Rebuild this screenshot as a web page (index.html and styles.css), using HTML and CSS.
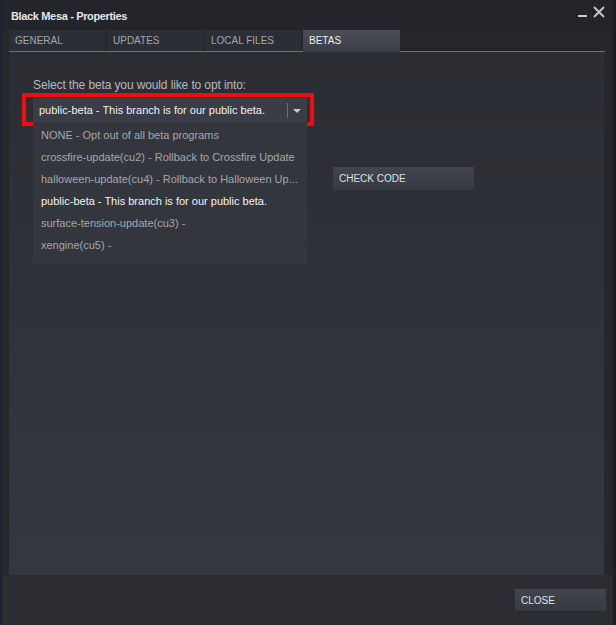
FILE: index.html
```html
<!DOCTYPE html>
<html>
<head>
<meta charset="utf-8">
<link rel="stylesheet" href="styles.css">
</head>
<body>
<div class="window">
  <div class="titlebar">
    <span class="title">Black Mesa - Properties</span>
    <div class="controls">
      <span class="min"></span>
      <svg class="close-x" width="12" height="12" viewBox="0 0 12 12"><path d="M1 1 L11 11 M11 1 L1 11" stroke="#c9ccd1" stroke-width="1.8" fill="none"/></svg>
    </div>
  </div>
  <div class="tabbar">
    <div class="tab">GENERAL</div>
    <div class="tab">UPDATES</div>
    <div class="tab">LOCAL FILES</div>
    <div class="tab active">BETAS</div>
  </div>
  <div class="panel">
    <div class="label">Select the beta you would like to opt into:</div>
    <div class="select-wrap">
      <div class="select">
        <span class="select-text">public-beta - This branch is for our public beta.</span>
        <span class="sep"></span>
        <span class="arrow"></span>
      </div>
      <div class="highlight"></div>
      <ul class="menu">
        <li>NONE - Opt out of all beta programs</li>
        <li>crossfire-update(cu2) - Rollback to Crossfire Update</li>
        <li>halloween-update(cu4) - Rollback to Halloween Up...</li>
        <li class="current">public-beta - This branch is for our public beta.</li>
        <li>surface-tension-update(cu3) -</li>
        <li>xengine(cu5) -</li>
      </ul>
    </div>
    <div class="code-row">
      <div class="code-space"></div>
      <button class="btn check">CHECK CODE</button>
    </div>
  </div>
  <div class="footer">
    <button class="btn closebtn">CLOSE</button>
  </div>
</div>
</body>
</html>
```
FILE: styles.css
```css
* { box-sizing: border-box; }
html, body {
  margin: 0;
  padding: 0;
  width: 616px;
  height: 625px;
  overflow: hidden;
  background: #24262c;
  font-family: "Liberation Sans", Arial, sans-serif;
}
.window {
  width: 616px;
  height: 625px;
  display: flex;
  flex-direction: column;
  background: #25272d;
  border-left: 2px solid #1c2431;
  border-right: 3px solid #1d1f24;
}
.titlebar {
  height: 30px;
  display: flex;
  align-items: center;
  justify-content: space-between;
  padding: 1px 8px 0 9px;
  background: #23252b;
}
.title {
  color: #e4e6e9;
  font-size: 11px;
  font-weight: bold;
  letter-spacing: -0.35px;
}
.controls {
  display: flex;
  align-items: flex-end;
  gap: 6px;
  margin-top: -7px;
}
.min {
  width: 9px;
  height: 2px;
  background: #c9ccd1;
  margin-bottom: 1px;
}
.close-x { display: block; }
.tabbar {
  display: flex;
  gap: 2px;
  margin: 0 8px 0 7px;
  height: 22px;
  border-bottom: 1px solid #6d7076;
}
.tab {
  width: 96px;
  height: 21px;
  background: #2c2e35;
  color: #a2a6ad;
  font-size: 10px;
  line-height: 21px;
  padding-left: 6px;
}
.tab.active {
  height: 22px;
  margin-bottom: -1px;
  background: linear-gradient(#4a4d56, #3b3e46);
  color: #eceef0;
  width: 97px;
}
.panel {
  flex: 0 0 523px;
  margin: 0 9px 0 7px;
  background: linear-gradient(#2b2d33, #34373f);
  padding: 26px 0 0 24px;
  position: relative;
}
.label {
  color: #b5b9bf;
  font-size: 12px;
  line-height: 15px;
  letter-spacing: -0.12px;
}
.select-wrap {
  position: relative;
  margin-top: 5px;
  width: 274px;
}
.select {
  height: 24px;
  background: #3a3d45;
  display: flex;
  align-items: center;
  padding-left: 6px;
  position: relative;
}
.select-text {
  color: #eef0f2;
  font-size: 11px;
  flex: 1;
}
.sep {
  width: 1px;
  height: 15px;
  background: #6c6f76;
  margin-right: 5px;
}
.arrow {
  width: 0;
  height: 0;
  border-left: 4px solid transparent;
  border-right: 4px solid transparent;
  border-top: 4px solid #c8cacf;
  margin-right: 6px;
  margin-top: 2px;
}
.highlight {
  position: absolute;
  left: -11px;
  top: -5px;
  width: 292px;
  height: 33px;
  border: 4px solid #f20d0d;
}
.menu {
  position: absolute;
  left: 0;
  top: 24px;
  width: 274px;
  margin: 0;
  padding: 2px 0 8px 0;
  list-style: none;
  background: #34363d;
  z-index: 2;
}
.menu li {
  height: 22px;
  line-height: 22px;
  padding-left: 8px;
  color: #a3a7ad;
  font-size: 11px;
  white-space: nowrap;
}
.menu li.current { color: #f2f3f5; }
.code-row {
  display: flex;
  margin-top: 45px;
}
.code-space { width: 300px; }
.btn {
  border: none;
  font-family: "Liberation Sans", Arial, sans-serif;
  font-size: 10px;
  color: #dfe2e6;
  text-align: left;
  padding: 0 0 0 6px;
  background: linear-gradient(#42454e, #363940);
}
.check {
  width: 141px;
  height: 23px;
}
.footer {
  flex: 1;
  display: flex;
  justify-content: flex-end;
  align-items: flex-start;
  padding: 14px 7px 0 0;
  background: #2b2d32;
}
.closebtn {
  width: 91px;
  height: 22px;
}
```
